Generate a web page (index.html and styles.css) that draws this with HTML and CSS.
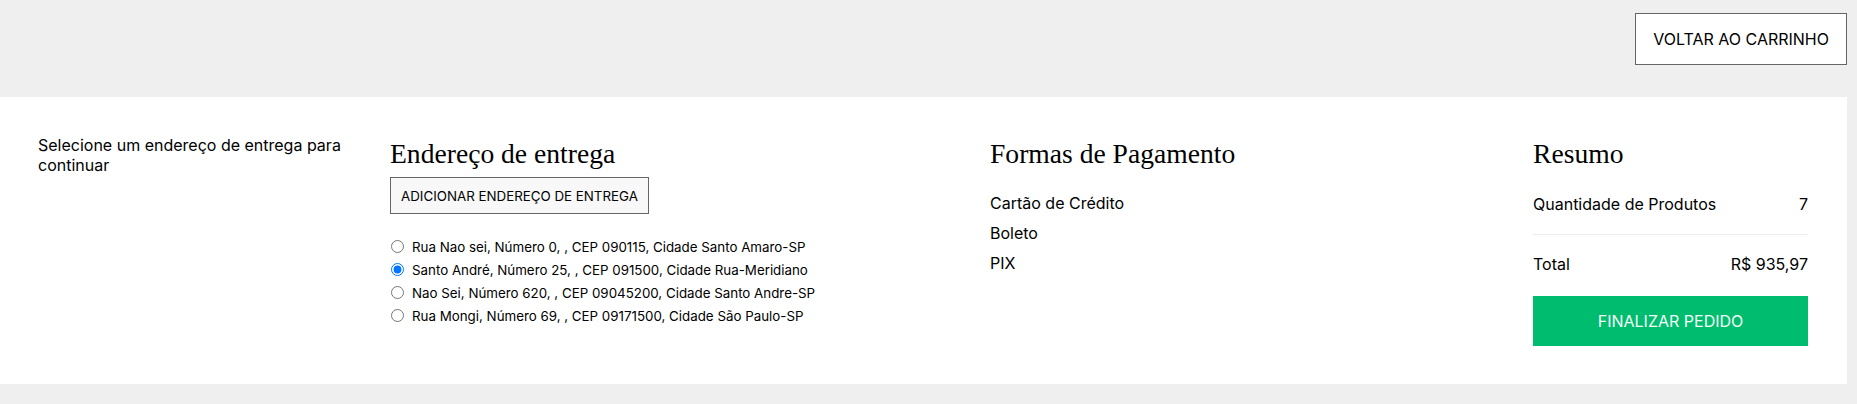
FILE: index.html
```html
<!DOCTYPE html>
<html lang="pt-BR">
<head>
<meta charset="utf-8">
<title>Checkout</title>
<link rel="stylesheet" href="styles.css">
</head>
<body>
<div class="page">
  <header class="topbar">
    <button class="btn-outline btn-back">VOLTAR AO CARRINHO</button>
  </header>
  <main class="panel">
    <section class="col col-notice">
      <p class="notice">Selecione um endereço de entrega para continuar</p>
    </section>
    <section class="col col-address">
      <h2 class="col-title">Endereço de entrega</h2>
      <button class="btn-outline btn-add">ADICIONAR ENDEREÇO DE ENTREGA</button>
      <div class="address-list">
        <label class="address"><input type="radio" name="addr"><span>Rua Nao sei, Número 0, , CEP 090115, Cidade Santo Amaro-SP</span></label>
        <label class="address"><input type="radio" name="addr" checked><span>Santo André, Número 25, , CEP 091500, Cidade Rua-Meridiano</span></label>
        <label class="address"><input type="radio" name="addr"><span>Nao Sei, Número 620, , CEP 09045200, Cidade Santo Andre-SP</span></label>
        <label class="address"><input type="radio" name="addr"><span>Rua Mongi, Número 69, , CEP 09171500, Cidade São Paulo-SP</span></label>
      </div>
    </section>
    <section class="col col-payment">
      <h2 class="col-title">Formas de Pagamento</h2>
      <ul class="pay-list">
        <li>Cartão de Crédito</li>
        <li>Boleto</li>
        <li>PIX</li>
      </ul>
    </section>
    <section class="col col-summary">
      <h2 class="col-title">Resumo</h2>
      <div class="sum-row sum-qty"><span>Quantidade de Produtos</span><span>7</span></div>
      <div class="sum-row sum-total"><span>Total</span><span>R$ 935,97</span></div>
      <button class="btn-finish">FINALIZAR PEDIDO</button>
    </section>
  </main>
</div>
</body>
</html>
```

FILE: styles.css
```css
* { box-sizing: border-box; }
html, body {
  margin: 0;
  background: #efefef;
  font-family: "Inter", "Liberation Sans", sans-serif;
  color: #000;
}
.page {
  margin-right: 10px;
}
.topbar {
  display: flex;
  justify-content: flex-end;
  padding: 13px 0 32px;
}
.btn-outline {
  font-family: "Inter", "Liberation Sans", sans-serif;
  border: 1px solid #666;
  color: #000;
  cursor: pointer;
}
.btn-back {
  height: 52px;
  padding: 0 17px;
  font-size: 16px;
  background: #fff;
}
.panel {
  background: #fff;
  display: grid;
  grid-template-columns: 314px 562px 505px 275px;
  column-gap: 38px;
  padding: 38px 38px 38px;
  align-items: start;
}
.notice {
  margin: 0;
  font-size: 16px;
}
.col-title {
  font-family: "Liberation Serif", "Times New Roman", serif;
  font-weight: normal;
  font-size: 27.6px;
  margin: 3px 0 0;
}
.btn-add {
  display: block;
  margin-top: 7px;
  height: 37px;
  padding: 0 10px;
  font-size: 13.33px;
  background: #f8f8f8;
}
.address-list {
  margin-top: 21px;
  display: flex;
  flex-direction: column;
}
.address {
  display: flex;
  align-items: center;
  height: 23px;
  font-size: 13.33px;
}
.address input {
  margin: 0 8px 0 1px;
  width: 13px;
  height: 13px;
}
.pay-list {
  list-style: none;
  margin: 23px 0 0;
  padding: 0;
  font-size: 16px;
}
.pay-list li {
  margin-bottom: 10px;
}
.sum-row {
  display: flex;
  justify-content: space-between;
  font-size: 16px;
}
.sum-qty {
  margin-top: 24px;
  padding-bottom: 20px;
  border-bottom: 1px solid #ececec;
}
.sum-total {
  padding-top: 19px;
}
.btn-finish {
  display: block;
  width: 100%;
  height: 50px;
  margin-top: 22px;
  border: none;
  background: #00bc6e;
  color: #f3fff8;
  font-family: "Inter", "Liberation Sans", sans-serif;
  font-size: 16px;
  cursor: pointer;
}
```
